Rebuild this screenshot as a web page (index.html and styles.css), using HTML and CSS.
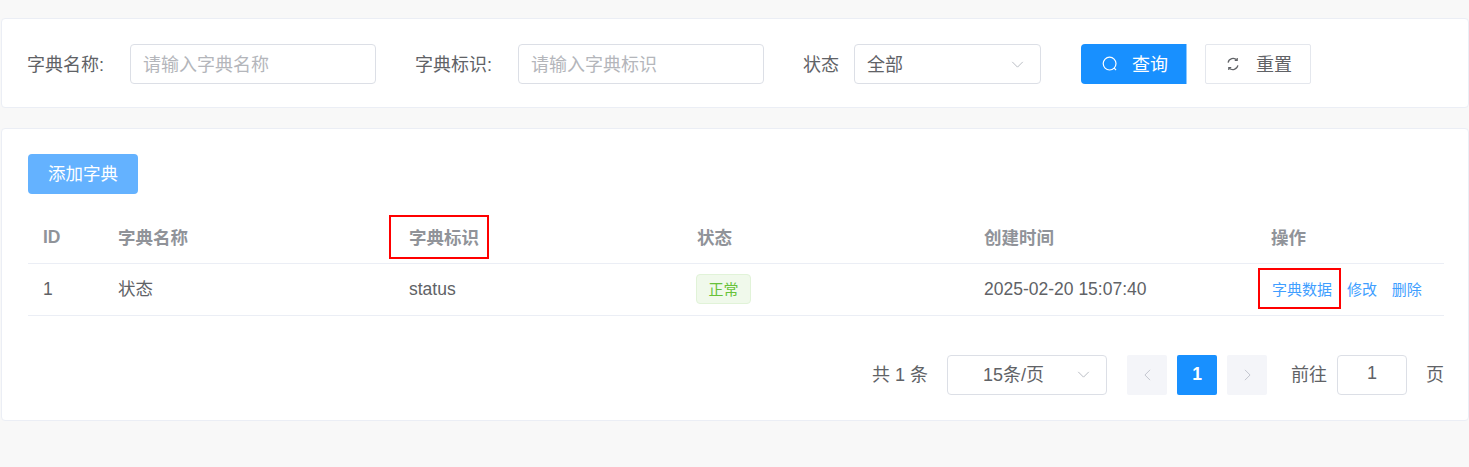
FILE: index.html
```html
<!DOCTYPE html>
<html lang="zh-CN">
<head>
    <meta charset="UTF-8">
    <title>字典管理</title>
    <link rel="stylesheet" href="styles.css">
</head>
<body>
    <div class="card search-card">
        <label class="field-label label-name">字典名称:</label>
        <div class="input input-name placeholder"><span>请输入字典名称</span></div>
        <label class="field-label label-key">字典标识:</label>
        <div class="input input-key placeholder"><span>请输入字典标识</span></div>
        <label class="field-label label-status">状态</label>
        <div class="input select-status">
            <span>全部</span>
            <svg class="arrow" viewBox="0 0 14 8"><path d="M1 1l6 6 6-6"/></svg>
        </div>
        <button class="btn btn-primary btn-search">
            <svg class="btn-icon" viewBox="0 0 16 16"><circle cx="7.6" cy="7.6" r="6.4"/><path d="M12.2 12.2l1.8 1.8"/></svg>
            <span>查询</span>
        </button>
        <button class="btn btn-reset">
            <svg class="btn-icon" viewBox="0 0 16 16"><path d="M2.4 6.4A5.8 5.8 0 0 1 12.4 3.6M13.6 9.6A5.8 5.8 0 0 1 3.6 12.4"/><path d="M12.8 1.2v2.8H10M3.2 14.8V12H6"/></svg>
            <span>重置</span>
        </button>
    </div>

    <div class="card table-card">
        <button class="btn-add">添加字典</button>

        <table class="dict-table">
            <colgroup>
                <col class="col-id">
                <col class="col-name">
                <col class="col-key">
                <col class="col-status">
                <col class="col-time">
                <col class="col-action">
            </colgroup>
            <thead>
                <tr>
                    <th class="latin">ID</th>
                    <th>字典名称</th>
                    <th><span class="mark mark-head">字典标识</span></th>
                    <th>状态</th>
                    <th>创建时间</th>
                    <th>操作</th>
                </tr>
            </thead>
            <tbody>
                <tr>
                    <td class="latin">1</td>
                    <td>状态</td>
                    <td class="latin">status</td>
                    <td class="cell-tag"><span class="tag">正常</span></td>
                    <td class="latin">2025-02-20 15:07:40</td>
                    <td class="actions">
                        <a class="mark mark-link" href="#">字典数据</a>
                        <a href="#">修改</a>
                        <a href="#">删除</a>
                    </td>
                </tr>
            </tbody>
        </table>

        <div class="pager">
            <span class="total">共 1 条</span>
            <div class="input page-size">
                <span>15条/页</span>
                <svg class="arrow" viewBox="0 0 14 8"><path d="M1 1l6 6 6-6"/></svg>
            </div>
            <button class="page-btn"><svg viewBox="0 0 8 14"><path d="M7 1L1 7l6 6"/></svg></button>
            <button class="page-btn active">1</button>
            <button class="page-btn"><svg viewBox="0 0 8 14"><path d="M1 1l6 6-6 6"/></svg></button>
            <span class="jump">前往</span>
            <div class="input page-input">1</div>
            <span class="unit">页</span>
        </div>
    </div>
</body>
</html>
```

FILE: styles.css
```css
* {
    box-sizing: border-box;
}

body {
    margin: 0;
    padding: 18px 0 0 1px;
    height: 467px;
    overflow: hidden;
    background: #f8f8f8;
    color: #606266;
    font-family: "Liberation Sans", "Noto Sans CJK SC", sans-serif;
    font-size: 18px;
}

.card {
    background: #fff;
    border: 1px solid #ebeef5;
    border-radius: 4px;
}

/* search bar */
.search-card {
    display: flex;
    align-items: center;
    height: 90px;
    padding: 2px 0 0 25px;
}

.field-label {
    flex: none;
    padding-bottom: 3px;
}

.label-name {
    width: 103px;
}

.label-key {
    width: 103px;
    margin-left: 39px;
}

.label-status {
    width: 51px;
    margin-left: 39px;
}

.input {
    display: flex;
    align-items: center;
    flex: none;
    height: 40px;
    background: #fff;
    border: 1px solid #dcdfe6;
    border-radius: 4px;
    padding: 0 12px;
}

.input span,
.btn span {
    padding-bottom: 3px;
}

.input-name,
.input-key {
    width: 246px;
}

.placeholder {
    color: #b4b6bb;
}

.select-status {
    justify-content: space-between;
    width: 187px;
    padding-right: 16px;
}

.arrow {
    width: 13px;
    height: 7px;
    fill: none;
    stroke: #b6bac2;
    stroke-width: 1.1;
}

.btn {
    display: flex;
    align-items: center;
    flex: none;
    height: 40px;
    font-family: inherit;
    font-size: 18px;
    cursor: pointer;
}

.btn-icon {
    width: 16px;
    height: 16px;
    margin-right: 14px;
    fill: none;
    stroke: currentColor;
    stroke-width: 1.2;
}

.btn-primary {
    width: 106px;
    margin-left: 40px;
    padding: 0 0 0 21px;
    background: #1890ff;
    border: none;
    border-right: 1px solid #8cc8ff;
    border-radius: 4px 0 0 4px;
    color: #fff;
}

.btn-reset {
    width: 106px;
    margin-left: 18px;
    padding: 0 0 0 20px;
    background: #fff;
    border: 1px solid #e4e7ed;
    border-radius: 2px;
    color: #606266;
}

.btn-reset .btn-icon {
    width: 14px;
    height: 14px;
    margin-right: 16px;
    stroke-width: 1.4;
}

/* table */
.table-card {
    height: 293px;
    margin-top: 20px;
    padding: 25px 24px 0 26px;
}

.btn-add {
    display: block;
    width: 110px;
    height: 40px;
    padding: 0 0 3px;
    background: #64b2ff;
    border: none;
    border-radius: 4px;
    color: #fff;
    font-family: inherit;
    font-size: 17.5px;
}

.dict-table {
    width: 1416px;
    margin-top: 17px;
    border-collapse: collapse;
    table-layout: fixed;
    font-size: 17.5px;
}

.col-id { width: 75px; }
.col-name { width: 291px; }
.col-key { width: 288px; }
.col-status { width: 287px; }
.col-time { width: 287px; }
.col-action { width: 188px; }

.dict-table th,
.dict-table td {
    padding: 0 0 3px 15px;
    text-align: left;
    border-bottom: 1px solid #ebeef5;
}

.dict-table th {
    height: 52px;
    padding-bottom: 0;
    color: #909399;
    font-weight: bold;
}

.dict-table th.latin {
    padding-top: 2px;
}

.dict-table td {
    height: 52px;
}

.dict-table td.latin,
.dict-table td.cell-tag {
    padding-bottom: 0;
}

.tag {
    display: inline-flex;
    align-items: center;
    justify-content: center;
    width: 55px;
    height: 30px;
    margin-left: -1px;
    padding-bottom: 2px;
    background: #f0f9eb;
    border: 1px solid #e1f3d8;
    border-radius: 4px;
    color: #67c23a;
    font-size: 15px;
    vertical-align: middle;
}

.dict-table td.actions {
    padding: 0 0 1px 16px;
}

.actions a {
    margin-right: 10px;
    color: #409eff;
    font-size: 15px;
    text-decoration: none;
}

/* red annotation boxes */
.mark {
    position: relative;
}

.mark::after {
    content: "";
    position: absolute;
    border: 2px solid #f00;
}

.mark-head::after {
    top: -13px;
    bottom: -11px;
    left: -20px;
    right: -10px;
}

.mark-link::after {
    top: -13px;
    bottom: -11px;
    left: -14px;
    right: -9px;
}

/* pagination */
.pager {
    display: flex;
    align-items: center;
    justify-content: flex-end;
    height: 40px;
    margin-top: 39px;
}

.pager > span {
    padding-bottom: 3px;
}

.total {
    margin-right: 19px;
}

.page-size {
    justify-content: space-between;
    width: 160px;
    padding: 0 16px 0 35px;
}

.page-btn {
    display: flex;
    align-items: center;
    justify-content: center;
    width: 40px;
    height: 40px;
    margin-left: 10px;
    padding: 0;
    background: #f4f5f9;
    border: none;
    border-radius: 2px;
    color: #606266;
    font-family: inherit;
    font-size: 17.5px;
    font-weight: bold;
}

.page-size + .page-btn {
    margin-left: 20px;
}

.page-btn svg {
    width: 7px;
    height: 12px;
    fill: none;
    stroke: #c0c4cc;
    stroke-width: 1.1;
}

.page-btn.active {
    background: #1890ff;
    color: #fff;
}

.jump {
    margin-left: 24px;
    margin-right: 10px;
}

.page-input {
    justify-content: center;
    width: 70px;
    padding: 0 0 2px;
}

.unit {
    margin-left: 19px;
}
```
